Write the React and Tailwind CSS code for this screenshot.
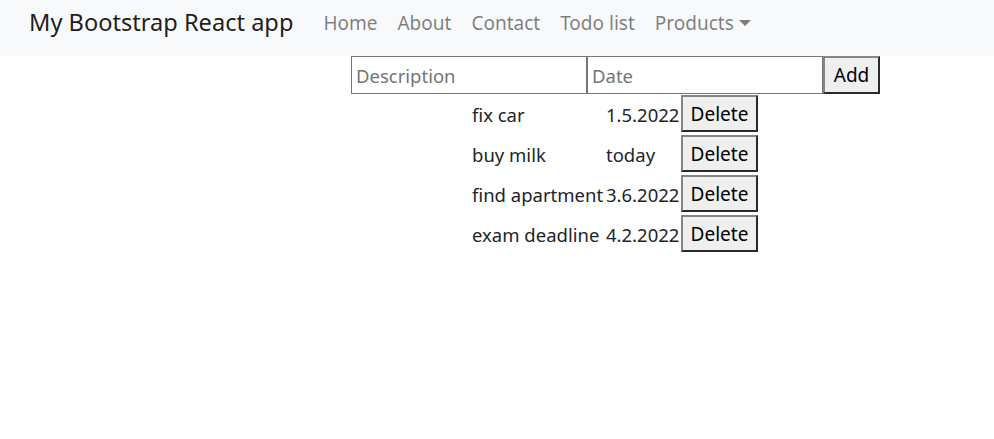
import React from "react";

const rows = [
  ["fix car", "1.5.2022"],
  ["buy milk", "today"],
  ["find apartment", "3.6.2022"],
  ["exam deadline", "4.2.2022"],
];

const btn =
  "bg-[#efefef] border-2 border-t-[#858585] border-l-[#858585] border-r-[#2b2b2b] border-b-[#2b2b2b] text-black text-[19px] leading-none flex items-center justify-center";

export default function App() {
  return (
    <div className="min-h-[439px] bg-white text-[#212529]" style={{ fontFamily: '"Noto Sans", "Open Sans", sans-serif' }}>
      <nav className="h-[56px] bg-[#f8f9fa] flex items-center pl-[29px] pb-[10px]">
        <span className="text-[23.6px] text-black/90 mr-[20px]">My Bootstrap React app</span>
        <ul className="flex items-center text-[19px] text-black/50">
          <li className="px-[10px]">Home</li>
          <li className="px-[10px]">About</li>
          <li className="px-[10px]">Contact</li>
          <li className="px-[10px]">Todo list</li>
          <li className="px-[10px] flex items-center">
            Products
            <span className="ml-[5px] w-0 h-0 border-t-[6px] border-t-black/50 border-x-[6px] border-x-transparent"></span>
          </li>
        </ul>
      </nav>
      <div className="flex flex-col items-start pl-[351px]">
        <div className="flex">
          <input
            className="w-[236px] h-[38px] border border-[#767676] px-[4px] pt-[1px] text-[18.5px] text-black placeholder:text-[#757575] outline-none"
            placeholder="Description"
          />
          <input
            className="w-[236px] h-[38px] border border-[#767676] px-[4px] pt-[1px] text-[18.5px] text-black placeholder:text-[#757575] outline-none"
            placeholder="Date"
          />
          <button className={btn + " w-[57px] h-[38px]"}>Add</button>
        </div>
        <div className="ml-[121px] mt-[1px] flex flex-col gap-[4px] text-[18.5px]">
          {rows.map(([d, t]) => (
            <div key={d} className="flex items-center h-[36px]">
              <span className="w-[134px] whitespace-nowrap pt-[3px]">{d}</span>
              <span className="w-[75px] whitespace-nowrap pt-[3px]">{t}</span>
              <button className={btn + " w-[77px] h-[37px] pt-[2px]"}>Delete</button>
            </div>
          ))}
        </div>
      </div>
    </div>
  );
}
